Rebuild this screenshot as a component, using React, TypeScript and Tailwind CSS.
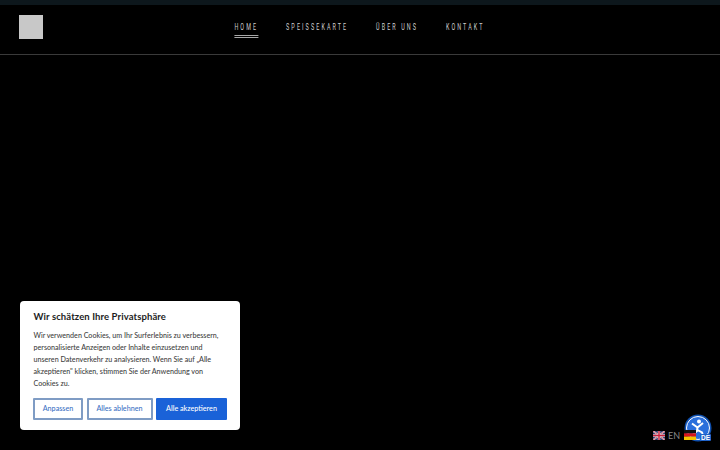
export default function App() {
  const nav = ["SPEISSEKARTE", "ÜBER UNS", "KONTAKT"];
  return (
    <div className="relative w-[720px] h-[450px] overflow-hidden bg-black font-['Lato',sans-serif]">
      <div className="h-[5px] bg-[#0d171c]" />
      <header className="relative flex h-[50px] items-center justify-center border-b border-[#3a3a3a]">
        <div className="absolute left-[19px] top-[10px] h-[24px] w-[24px] bg-[#c8c8c8]" />
        <nav className="flex scale-x-[0.6] items-center gap-[46.5px] pb-[6px] text-[9px] leading-[10px] tracking-[3.5px] text-[#cfcfcf] font-['Roboto',sans-serif] font-normal">
          <span className="relative">
            HOME
            <span className="absolute left-0 right-0 top-[13px] h-[3px] border-y border-[#a8a8a8]" />
          </span>
          {nav.map((n) => (
            <span key={n}>{n}</span>
          ))}
        </nav>
      </header>

      <div className="absolute left-[20px] top-[301px] w-[220px] h-[129px] rounded-[4px] bg-white pl-[13px] pr-[12px] pt-[10px] text-[#3f3f3f]">
        <h2 className="pl-[0.5px] text-[9.5px] leading-[12px] font-bold tracking-[0.1px] text-[#1d1d1d]">Wir schätzen Ihre Privatsphäre</h2>
        <p className="mt-[7px] pl-[0.5px] text-[7.15px] leading-[12px] font-medium">
          Wir verwenden Cookies, um Ihr Surferlebnis zu verbessern, personalisierte Anzeigen oder Inhalte einzusetzen und unseren Datenverkehr zu analysieren. Wenn Sie auf „Alle akzeptieren" klicken, stimmen Sie der Anwendung von Cookies zu.
        </p>
        <div className="mt-[8px] flex gap-[3.5px] text-[7.2px] font-medium">
          <button className="h-[22px] w-[50px] rounded-[1px] border-2 border-[#7f9cc4] bg-white text-[#3d72c4]">Anpassen</button>
          <button className="h-[22px] w-[66px] rounded-[1px] border-2 border-[#7f9cc4] bg-white text-[#3d72c4]">Alles ablehnen</button>
          <button className="h-[22px] w-[71px] rounded-[1px] bg-[#1a62d8] text-white">Alle akzeptieren</button>
        </div>
      </div>

      <div className="absolute left-[653px] top-[430px] flex items-center gap-[3px] text-[9px] leading-[11px] text-[#8a8a8a]">
        <svg width="12" height="9" viewBox="0 0 60 40" preserveAspectRatio="none">
          <rect width="60" height="40" fill="#2a3a6e" />
          <path d="M0 0L60 40M60 0L0 40" stroke="#e8e0e0" strokeWidth="8" />
          <path d="M0 0L60 40M60 0L0 40" stroke="#c8203e" strokeWidth="3" />
          <path d="M30 0V40M0 20H60" stroke="#e8e0e0" strokeWidth="12" />
          <path d="M30 0V40M0 20H60" stroke="#c8203e" strokeWidth="7" />
        </svg>
        <span>EN</span>
      </div>

      <svg className="absolute left-[684px] top-[414px]" width="28" height="28" viewBox="0 0 28 28">
        <circle cx="14" cy="14" r="13.5" fill="#0f4fae" />
        <circle cx="14" cy="14" r="11.5" fill="#2a6fdc" stroke="#fff" strokeWidth="1" />
        <circle cx="15" cy="7.5" r="2" fill="#fff" />
        <path d="M8 9.5l5.5 4 5.5-4.5M13.5 13.5l-.5 3.5-4 3.5M13.5 16l4.5 2.5 1 3" stroke="#fff" strokeWidth="2" fill="none" />
        <rect x="16" y="20" width="11" height="7" rx="1" fill="#1f62c8" />
        <text x="21.5" y="26" textAnchor="middle" fontSize="6.5" fontWeight="700" fill="#fff" fontFamily="Liberation Sans, sans-serif">DE</text>
      </svg>
      <svg className="absolute left-[684px] top-[430px]" width="12" height="10" viewBox="0 0 12 10">
        <rect width="12" height="3.4" fill="#111" />
        <rect y="3.3" width="12" height="3.4" fill="#d8141c" />
        <rect y="6.6" width="12" height="3.4" fill="#f5c400" />
      </svg>
    </div>
  );
}
